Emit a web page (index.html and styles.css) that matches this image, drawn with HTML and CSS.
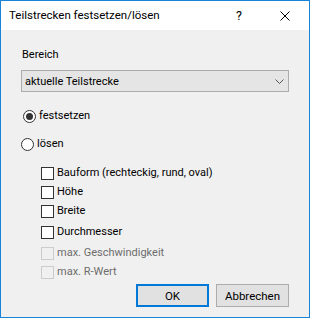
FILE: index.html
```html
<!DOCTYPE html>
<html lang="de">
<head>
    <meta charset="UTF-8">
    <title>Teilstrecken festsetzen/lösen</title>
    <link rel="stylesheet" href="styles.css">
</head>
<body>
    <div class="window">
        <div class="title-bar">
            <span class="title">Teilstrecken festsetzen/lösen</span>
            <span class="help">?</span>
            <span class="close">
                <svg width="10" height="10" viewBox="0 0 10 10">
                    <path d="M0.5 0.5 L9.5 9.5 M9.5 0.5 L0.5 9.5" stroke="#000" stroke-width="1"/>
                </svg>
            </span>
        </div>

        <div class="content">
            <div class="label">Bereich</div>
            <div class="combo">
                <span>aktuelle Teilstrecke</span>
                <svg width="9" height="5" viewBox="0 0 9 5">
                    <path d="M0.5 0.5 L4.5 4.5 L8.5 0.5" fill="none" stroke="#555" stroke-width="1"/>
                </svg>
            </div>

            <label class="radio first"><span class="dot checked"></span>festsetzen</label>
            <label class="radio second"><span class="dot"></span>lösen</label>

            <div class="checks">
                <label class="check"><span class="box"></span>Bauform (rechteckig, rund, oval)</label>
                <label class="check"><span class="box"></span>Höhe</label>
                <label class="check"><span class="box"></span>Breite</label>
                <label class="check gap"><span class="box"></span>Durchmesser</label>
                <label class="check gap disabled"><span class="box"></span>max. Geschwindigkeit</label>
                <label class="check disabled"><span class="box"></span>max. R-Wert</label>
            </div>

            <div class="buttons">
                <button class="btn default">OK</button>
                <button class="btn">Abbrechen</button>
            </div>
        </div>
    </div>
</body>
</html>
```

FILE: styles.css
```css
/* Fenster */
body {
    margin: 0;
    font-family: 'Roboto', 'Liberation Sans', sans-serif;
    font-size: 11px;
    color: #000;
    background: #fff;
}

.window {
    width: 310px;
    height: 318px;
    box-sizing: border-box;
    border: 1px solid #1883d7;
    display: flex;
    flex-direction: column;
    background-color: #f0f0f0;
}

/* Titelleiste */
.title-bar {
    height: 29px;
    background-color: #fff;
    display: flex;
    align-items: center;
    padding-left: 8px;
}

.title {
    flex: 1;
    font-size: 11.5px;
    margin-top: -1px;
}

.help {
    width: 46px;
    text-align: center;
    font-size: 12.5px;
}

.close {
    width: 46px;
    height: 29px;
    display: flex;
    align-items: center;
    justify-content: center;
    margin-right: 1px;
}

/* Inhalt */
.content {
    flex: 1;
    display: flex;
    flex-direction: column;
    padding: 0 20px;
}

.label {
    margin-top: 17px;
    padding-left: 1px;
    line-height: 16px;
}

.combo {
    margin-top: 7px;
    height: 22px;
    box-sizing: border-box;
    border: 1px solid #acacac;
    background-color: #e5e5e5;
    display: flex;
    align-items: center;
    justify-content: space-between;
    padding: 0 4px 0 3px;
}

.radio {
    display: flex;
    align-items: center;
    line-height: 16px;
}

.radio.first {
    margin-top: 16px;
    margin-left: 2px;
}

.radio.second {
    margin-top: 12px;
}

.dot {
    width: 13px;
    height: 13px;
    box-sizing: border-box;
    border: 1px solid #333;
    border-radius: 50%;
    background-color: #fff;
    margin-right: 3px;
    display: flex;
    align-items: center;
    justify-content: center;
}

.dot.checked::after {
    content: '';
    width: 7px;
    height: 7px;
    border-radius: 50%;
    background-color: #333;
}

/* Kontrollkästchen */
.checks {
    margin-top: 13px;
    padding-left: 20px;
    display: flex;
    flex-direction: column;
    gap: 3px;
}

.check {
    display: flex;
    align-items: center;
    line-height: 16px;
}

.check.gap {
    margin-top: 2px;
}

.box {
    width: 13px;
    height: 13px;
    box-sizing: border-box;
    border: 1px solid #333;
    background-color: #fff;
    margin-right: 3px;
}

.check.disabled {
    color: #6d6d6d;
}

.check.disabled .box {
    border-color: #ccc;
    background-color: #f0f0f0;
}

/* Schaltflächen */
.buttons {
    margin-top: auto;
    margin-bottom: 10px;
    display: flex;
    justify-content: flex-end;
    gap: 7px;
}

.btn {
    width: 73px;
    height: 23px;
    box-sizing: border-box;
    border: 1px solid #adadad;
    background-color: #e1e1e1;
    font-family: inherit;
    font-size: 11.5px;
    padding: 0;
}

.btn.default {
    border: 2px solid #0078d7;
}
```
